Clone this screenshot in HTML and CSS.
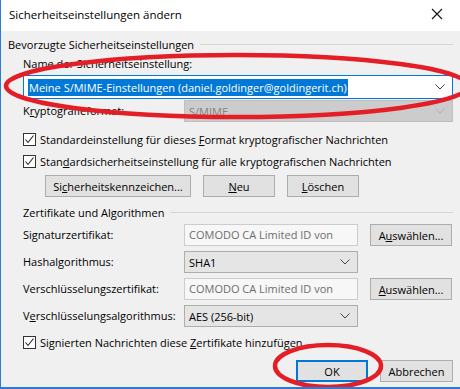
FILE: index.html
```html
<!DOCTYPE html>
<html lang="de">
<head>
    <meta charset="UTF-8">
    <title>Sicherheitseinstellungen ändern</title>
    <link rel="stylesheet" href="styles.css">
</head>
<body>
    <div class="window">
        <div class="titlebar">
            <span class="title">Sicherheitseinstellungen ändern</span>
            <svg class="close" width="12" height="12" viewBox="0 0 12 12">
                <path d="M1 1 L11 11 M11 1 L1 11" stroke="#111" stroke-width="1.1" fill="none"/>
            </svg>
        </div>

        <div class="content">
            <div class="group-head">
                <span>Bevorzugte Sicherheitseinstellungen</span>
                <div class="rule"></div>
            </div>

            <div class="indent">
                <div class="label name-label">Name der Sicherheitseinstellung:</div>
                <div class="combo focused">
                    <span class="selected">Meine S/MIME-Einstellungen (daniel.goldinger@goldingerit.ch)</span>
                    <svg class="chev" width="10" height="6" viewBox="0 0 10 6"><path d="M0.5 0.5 L5 5 L9.5 0.5" stroke="#444" fill="none"/></svg>
                </div>

                <div class="row format-row">
                    <span class="label">K<u>r</u>yptografieformat:</span>
                    <div class="combo disabled">
                        <span>S/MIME</span>
                        <svg class="chev" width="10" height="6" viewBox="0 0 10 6"><path d="M0.5 0.5 L5 5 L9.5 0.5" stroke="#b0b0b0" fill="none"/></svg>
                    </div>
                </div>

                <div class="check-row first-check">
                    <span class="box"><svg width="11" height="11" viewBox="0 0 11 11"><path d="M1.5 5.5 L4 8.5 L9.5 1.5" stroke="#222" stroke-width="1.1" fill="none"/></svg></span>
                    <span>Standardeinstellung für dieses <u>F</u>ormat kryptografischer Nachrichten</span>
                </div>
                <div class="check-row">
                    <span class="box"><svg width="11" height="11" viewBox="0 0 11 11"><path d="M1.5 5.5 L4 8.5 L9.5 1.5" stroke="#222" stroke-width="1.1" fill="none"/></svg></span>
                    <span>Stan<u>d</u>ardsicherheitseinstellung für alle kryptografischen Nachrichten</span>
                </div>

                <div class="button-row">
                    <button class="btn btn-label">Si<u>c</u>herheitskennzeichen...</button>
                    <button class="btn btn-new"><u>N</u>eu</button>
                    <button class="btn btn-delete"><u>L</u>öschen</button>
                </div>

                <div class="group-head sub">
                    <span>Zertifikate und Algorithmen</span>
                    <div class="rule"></div>
                </div>

                <div class="row field-row">
                    <span class="label">Signaturzertifikat:</span>
                    <div class="field">COMODO CA Limited ID von</div>
                    <button class="btn btn-choose">A<u>u</u>swählen...</button>
                </div>
                <div class="row field-row">
                    <span class="label">Hashal<u>g</u>orithmus:</span>
                    <div class="combo plain">
                        <span>SHA1</span>
                        <svg class="chev" width="10" height="6" viewBox="0 0 10 6"><path d="M0.5 0.5 L5 5 L9.5 0.5" stroke="#444" fill="none"/></svg>
                    </div>
                </div>
                <div class="row field-row">
                    <span class="label">Verschlüsselungszertifikat:</span>
                    <div class="field">COMODO CA Limited ID von</div>
                    <button class="btn btn-choose"><u>A</u>uswählen...</button>
                </div>
                <div class="row field-row">
                    <span class="label">V<u>e</u>rschlüsselungsalgorithmus:</span>
                    <div class="combo plain">
                        <span>AES (256-bit)</span>
                        <svg class="chev" width="10" height="6" viewBox="0 0 10 6"><path d="M0.5 0.5 L5 5 L9.5 0.5" stroke="#444" fill="none"/></svg>
                    </div>
                </div>

                <div class="check-row last-check">
                    <span class="box"><svg width="11" height="11" viewBox="0 0 11 11"><path d="M1.5 5.5 L4 8.5 L9.5 1.5" stroke="#222" stroke-width="1.1" fill="none"/></svg></span>
                    <span>Signierten Nachrichten diese <u>Z</u>ertifikate hinzufügen</span>
                </div>
            </div>

            <div class="footer">
                <button class="btn btn-ok">OK</button>
                <button class="btn btn-cancel">Abbrechen</button>
            </div>
        </div>

        <!-- red marks drawn over the screenshot -->
        <svg class="marks" width="460" height="389" viewBox="0 0 460 389">
            <ellipse cx="237" cy="86" rx="231" ry="31" stroke="#e41e26" stroke-width="4.5" fill="none"/>
            <ellipse cx="328" cy="366" rx="53" ry="21" stroke="#e41e26" stroke-width="4.5" fill="none"/>
        </svg>
    </div>
</body>
</html>
```

FILE: styles.css
```css
body {
    margin: 0;
    padding: 0;
    font-family: 'Open Sans', 'Noto Sans', sans-serif;
    font-size: 11px;
    color: #000;
    background-color: #f0f0f0;
}

.window {
    position: relative;
    width: 460px;
    height: 389px;
    box-sizing: border-box;
    border-left: 1px solid #2b7bd4;
    border-bottom: 2px solid #2b7bd4;
    background-color: #f0f0f0;
    overflow: hidden;
}

.titlebar {
    height: 31px;
    background-color: #ffffff;
    display: flex;
    align-items: center;
    justify-content: space-between;
    padding: 0 17px 0 8px;
}

.title {
    font-size: 11.5px;
    padding-bottom: 2px;
}

.close {
    margin-top: -4px;
}

.content {
    padding: 5px 7px 0 7px;
}

.group-head {
    display: flex;
    align-items: center;
    height: 16px;
}

.group-head .rule {
    flex: 1;
    height: 1px;
    background-color: #d5d5d5;
    margin-left: 6px;
}

.group-head.sub {
    margin-top: 7px;
}

.indent {
    padding-left: 15px;
}

.label {
    line-height: 16px;
}

.name-label {
    margin-top: 4px;
}

.combo {
    display: flex;
    align-items: center;
    justify-content: space-between;
    box-sizing: border-box;
    padding: 0 7px 0 4px;
}

.combo.focused {
    height: 24px;
    margin-top: 3px;
    background-color: #ffffff;
    border: 1px solid #0078d7;
}

.selected {
    background-color: #0078d7;
    color: #ffffff;
    padding: 1px 1px;
}

.row {
    display: flex;
    align-items: center;
}

.row .label {
    width: 161px;
    white-space: nowrap;
}

.format-row {
    margin-top: 1px;
    height: 22px;
}

.combo.disabled {
    flex: 1;
    height: 22px;
    background-color: #cccccc;
    border: 1px solid #bfbfbf;
    color: #838383;
}

.check-row {
    display: flex;
    align-items: center;
    height: 22px;
}

.first-check {
    margin-top: 6px;
}

.box {
    width: 11px;
    height: 11px;
    border: 1px solid #333;
    background-color: #ffffff;
    margin-right: 4px;
    display: flex;
}

.button-row {
    display: flex;
    padding-left: 22px;
    margin-top: 3px;
}

.btn {
    font-family: inherit;
    font-size: 11px;
    height: 22px;
    box-sizing: border-box;
    background-color: #e1e1e1;
    border: 1px solid #adadad;
    padding: 0;
    color: #000;
}

.btn-label {
    width: 146px;
}

.btn-new {
    width: 72px;
    margin-left: 12px;
}

.btn-delete {
    width: 72px;
    margin-left: 12px;
}

.field-row {
    height: 22px;
    margin-top: 5px;
}

.group-head.sub + .field-row {
    margin-top: 4px;
}

.field {
    width: 174px;
    height: 22px;
    box-sizing: border-box;
    border: 1px solid #cccccc;
    background-color: #f7f7f7;
    color: #6d6d6d;
    padding-left: 4px;
    line-height: 20px;
}

.combo.plain {
    width: 174px;
    height: 22px;
    background-color: #e5e5e5;
    border: 1px solid #adadad;
}

.btn-choose {
    width: 82px;
    margin-left: 12px;
}

.last-check {
    margin-top: 4px;
}

.footer {
    display: flex;
    justify-content: flex-end;
    margin-top: 7px;
}

.btn-ok {
    width: 72px;
    border: 2px solid #0078d7;
}

.btn-cancel {
    width: 73px;
    margin-left: 12px;
}

.marks {
    position: absolute;
    left: -1px;
    top: 0;
    pointer-events: none;
}
```
